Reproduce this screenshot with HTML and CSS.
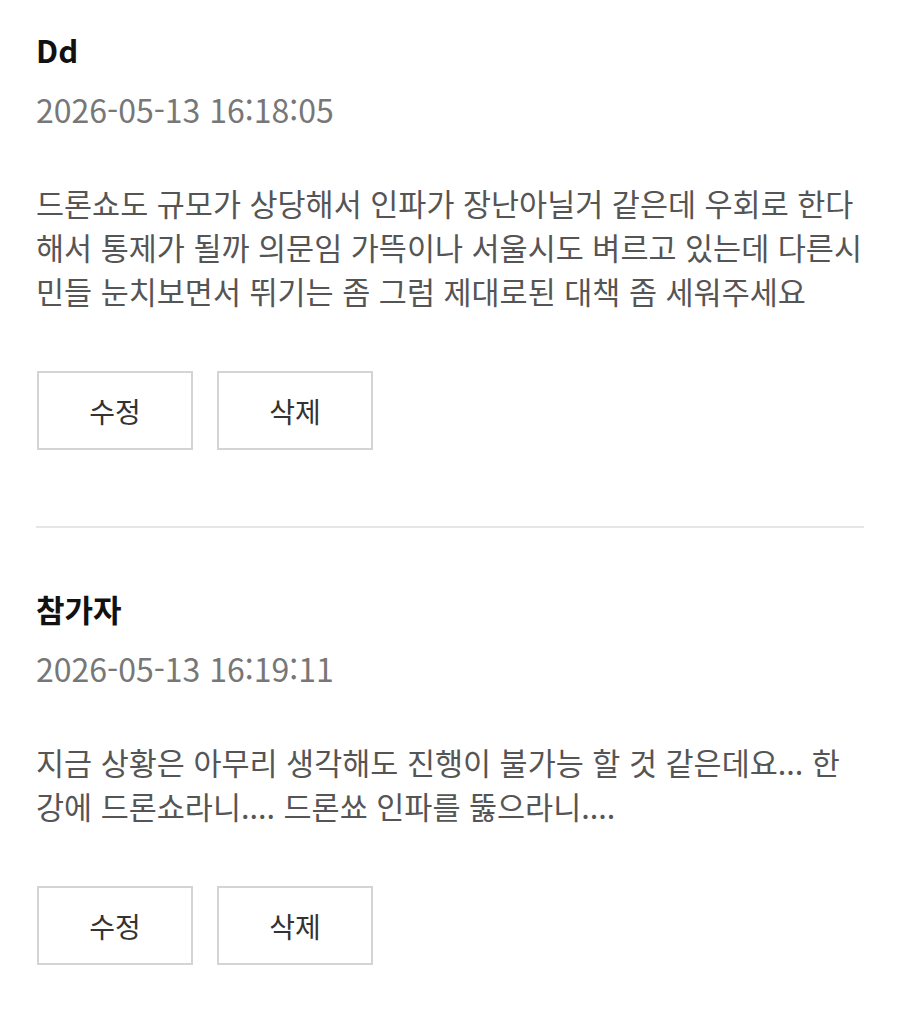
FILE: index.html
```html
<!DOCTYPE html>
<html lang="ko">
<head>
<meta charset="utf-8">
<link rel="stylesheet" href="styles.css">
</head>
<body>
<div class="comments">
  <div class="comment">
    <div class="name">Dd</div>
    <div class="date">2026-05-13 16:18:05</div>
    <p class="text">드론쇼도 규모가 상당해서 인파가 장난아닐거 같은데 우회로 한다해서 통제가 될까 의문임 가뜩이나 서울시도 벼르고 있는데 다른시민들 눈치보면서 뛰기는 좀 그럼 제대로된 대책 좀 세워주세요</p>
    <div class="actions">
      <button class="btn">수정</button>
      <button class="btn">삭제</button>
    </div>
  </div>
  <div class="comment">
    <div class="name">참가자</div>
    <div class="date">2026-05-13 16:19:11</div>
    <p class="text">지금 상황은 아무리 생각해도 진행이 불가능 할 것 같은데요... 한강에 드론쇼라니.... 드론쑈 인파를 뚫으라니....</p>
    <div class="actions">
      <button class="btn">수정</button>
      <button class="btn">삭제</button>
    </div>
  </div>
</div>
</body>
</html>
```

FILE: styles.css
```css
html, body {
  margin: 0;
  padding: 0;
  background: #ffffff;
}
body {
  font-family: "Noto Sans CJK KR", "Noto Sans", sans-serif;
}
.comments {
  padding: 0 36px;
}
.comment {
  padding: 29px 0 76px;
}
.comment + .comment {
  border-top: 2px solid #e6e6e6;
  padding-top: 60px;
}
.name {
  font-size: 31px;
  line-height: 42px;
  font-weight: 700;
  color: #111111;
}
.date {
  margin-top: 18px;
  font-size: 32px;
  line-height: 40px;
  color: #777777;
}
.text {
  margin: 52px 0 0;
  font-size: 30.5px;
  line-height: 44px;
  color: #555555;
  word-break: break-all;
}
.actions {
  display: flex;
  gap: 24px;
  margin-top: 58px;
  padding-left: 1px;
}
.btn {
  box-sizing: border-box;
  width: 156px;
  height: 79px;
  background: #ffffff;
  border: 2px solid #d4d4d4;
  border-radius: 0;
  font-family: inherit;
  font-size: 28px;
  color: #333333;
  padding: 0;
}
```
